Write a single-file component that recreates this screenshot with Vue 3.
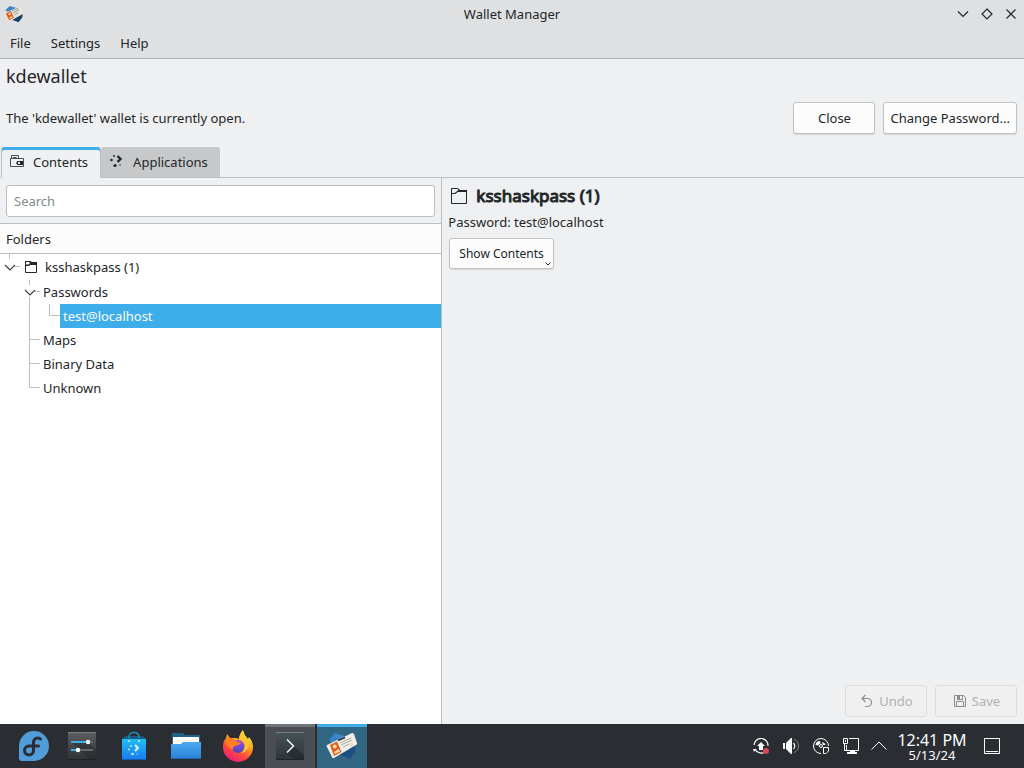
<script setup>
import { ref } from 'vue'
const search = ref('')
</script>

<template>
  <div class="desktop">
    <div class="window">
      <header class="top">
        <div class="titlebar">
          <svg class="app-icon" viewBox="0 0 32 32" aria-hidden="true">
            <path d="M2 10 L9 3 L19 6 L12 16 Z" fill="#3986cb" />
            <path d="M13 25 L30 16 L29 22 L23 29 Z" fill="#17406b" />
            <path d="M0 15 L26 3 L32 14 L7 29 Z" fill="#e9e5de" />
            <path d="M3 15 L11 11 L16 22 L8 26 Z" fill="#e25e14" />
            <circle cx="9" cy="16" r="2" fill="#f6d9c4" />
            <path d="M8 22 L13 19 L14 21 L9 24 Z" fill="#f6d9c4" />
            <path d="M13 11 L22 7 M15 14 L24 9 M17 17 L23 14" stroke="#77797b" stroke-width="1.2" />
          </svg>
          <h1 class="title">Wallet Manager</h1>
          <div class="winbtns">
            <button type="button" aria-label="Minimize">
              <svg viewBox="0 0 14 14"><path d="M2 4.5 L7 9.5 L12 4.5" /></svg>
            </button>
            <button type="button" aria-label="Maximize">
              <svg viewBox="0 0 14 14"><path d="M7 2 L12 7 L7 12 L2 7 Z" /></svg>
            </button>
            <button type="button" aria-label="Close window">
              <svg viewBox="0 0 14 14"><path d="M2.5 2.5 L11.5 11.5 M11.5 2.5 L2.5 11.5" /></svg>
            </button>
          </div>
        </div>
        <nav class="menubar">
          <button type="button">File</button>
          <button type="button">Settings</button>
          <button type="button">Help</button>
        </nav>
      </header>

      <h2 class="wallet-name">kdewallet</h2>
      <div class="status">
        <span class="status-text">The 'kdewallet' wallet is currently open.</span>
        <button type="button" class="btn close-btn">Close</button>
        <button type="button" class="btn">Change Password...</button>
      </div>

      <div class="tabs" role="tablist">
        <button type="button" role="tab" class="tab active" aria-selected="true">
          <svg viewBox="0 0 16 16" aria-hidden="true">
            <path d="M1.5 4.5 H14.5 V12.5 H1.5 Z M2.5 4.5 V1.5 H9.5 V4.5 M4.5 4.5 V3.5 H7.5" fill="none" stroke="#4b4e51" />
            <path d="M7 9 L8.500 7 H14 V11 H8.500 Z" fill="#232629" />
            <rect x="9" y="8" width="2" height="2" fill="#eff0f1" />
          </svg>
          Contents
        </button>
        <button type="button" role="tab" class="tab" aria-selected="false">
          <svg viewBox="0 0 16 16" aria-hidden="true">
            <path d="M8.500 2 L11.500 5 L8.500 8" fill="none" stroke="#232629" stroke-width="2.400" />
            <g fill="#232629">
              <circle cx="5" cy="2" r="1" /><circle cx="2.500" cy="6" r="1.300" />
              <circle cx="6" cy="11.500" r="1.600" /><circle cx="11" cy="11" r=".8" />
            </g>
          </svg>
          Applications
        </button>
      </div>

      <main class="panes">
        <section class="left">
          <div class="search">
            <input v-model="search" type="text" placeholder="Search" aria-label="Search" />
          </div>
          <div class="folders-head">Folders</div>
          <div class="tree" role="tree">
            <div class="row root" role="treeitem" aria-expanded="true">
              <svg class="branch" width="20" height="26" viewBox="0 0 20 26">
                <path class="line" d="M9.5 0 V5 M15 12.5 H20" />
                <path class="arrow" d="M5 11 L10 16 L15 11" />
              </svg>
              <svg class="folder" width="16" height="16" viewBox="0 0 16 16">
                <path d="M2.5 2.5 H7.5 L8.5 3.5 H13.5 V13.5 H2.5 Z" fill="none" stroke="#232629" />
                <path d="M2 2 H7 L9 3 H14 V6 H7 L6 7 H2 Z" fill="#232629" />
                <path d="M3 3 H6 L7 4 L5.500 5.500 H3 Z" fill="#fff" />
              </svg>
              <span>ksshaskpass (1)</span>
            </div>
            <div class="row" role="treeitem" aria-expanded="true">
              <svg class="branch" width="40" height="24" viewBox="0 0 40 24">
                <path class="line" d="M29.5 0 V5 M35 11.500 H40 M29.5 17 V24" />
                <path class="arrow" d="M25 10 L30 15 L35 10" />
              </svg>
              <span>Passwords</span>
            </div>
            <div class="row" role="treeitem" aria-selected="true">
              <svg class="branch" width="60" height="24" viewBox="0 0 60 24">
                <path class="line" d="M29.5 0 V24 M49.5 0 V11.5 H60" />
              </svg>
              <span class="selected">test@localhost</span>
            </div>
            <div class="row" role="treeitem">
              <svg class="branch" width="40" height="24" viewBox="0 0 40 24"><path class="line" d="M29.5 0 V24 M30 11.5 H40" /></svg>
              <span>Maps</span>
            </div>
            <div class="row" role="treeitem">
              <svg class="branch" width="40" height="24" viewBox="0 0 40 24"><path class="line" d="M29.5 0 V24 M30 11.5 H40" /></svg>
              <span>Binary Data</span>
            </div>
            <div class="row" role="treeitem">
              <svg class="branch" width="40" height="24" viewBox="0 0 40 24"><path class="line" d="M29.5 0 V11.5 H40" /></svg>
              <span>Unknown</span>
            </div>
          </div>
        </section>

        <section class="right">
          <div class="entry-head">
            <svg width="22" height="22" viewBox="0 0 22 22" aria-hidden="true">
              <path d="M3.5 3.5 H9.500 L11.500 5.500 H18.500 V18.500 H3.500 Z" fill="none" stroke="#232629" />
              <path d="M10 3 L12 5 H19 V7 H10 L7 9 H3 V8 H6.500 L10.500 5 Z" fill="#232629" />
            </svg>
            <h3>ksshaskpass (1)</h3>
          </div>
          <p class="entry-sub">Password: test@localhost</p>
          <button type="button" class="btn show-btn">
            Show Contents
            <svg viewBox="0 0 6 4" aria-hidden="true"><path d="M.5 .5 L3 3 L5.5 .5" fill="none" stroke="#232629" /></svg>
          </button>
          <div class="actions">
            <button type="button" class="btn" disabled>
              <svg viewBox="0 0 16 16" aria-hidden="true">
                <path d="M6.500 2 L3 5.500 L6.500 9 M3 5.500 H8.500 A4 4 0 0 1 8.500 13.500 H6" fill="none" stroke="#8b8d8f" stroke-width="1.2" />
              </svg>
              Undo
            </button>
            <button type="button" class="btn" disabled>
              <svg viewBox="0 0 16 16" aria-hidden="true">
                <path d="M2.500 2.500 H11.500 L13.500 4.500 V13.500 H2.500 Z M4.500 13.500 V8.500 H11.500 V13.500" fill="none" stroke="#8b8d8f" />
                <path d="M5 2 H11 V7 H5 Z M8 3 V6 H10 V3 Z" fill="#8b8d8f" fill-rule="evenodd" />
              </svg>
              Save
            </button>
          </div>
        </section>
      </main>
    </div>

    <footer class="panel">
      <button type="button" class="launcher start" aria-label="Application Launcher">
        <svg viewBox="0 0 32 32">
          <path d="M16 1 A15 15 0 1 1 16 31 H4 A3 3 0 0 1 1 28 V16 A15 15 0 0 1 16 1 Z" fill="#519dd9" />
          <path d="M22.500 9 C19 6.500 15.500 9 15.500 12.500 V20.500 A4.500 4.500 0 1 1 11 16 M11 16 H20.500" fill="none" stroke="#2a2e32" stroke-width="3" stroke-linecap="round" />
        </svg>
      </button>
      <button type="button" class="launcher settings" aria-label="System Settings">
        <svg viewBox="0 0 32 32">
          <defs>
            <linearGradient id="gs" x1="0" y1="0" x2="0" y2="1"><stop offset="0" stop-color="#5b5e61" /><stop offset="1" stop-color="#303336" /></linearGradient>
          </defs>
          <rect x="2" y="2" width="28" height="28" fill="url(#gs)" />
          <path d="M5 12 L24 30 H30 V20 L22 12 Z" fill="#252729" opacity=".5" />
          <path d="M2 2.500 H30" stroke="#797b7d" />
          <path d="M2 29.500 H30" stroke="#202325" />
          <path d="M5 12 H27 M5 20 H27" stroke="#66696b" stroke-width="2" />
          <path d="M5 12 H20 M5 20 H12" stroke="#3daee9" stroke-width="2" />
          <circle cx="22" cy="12" r="2.200" fill="#fff" /><circle cx="12" cy="20" r="2.200" fill="#fff" />
        </svg>
      </button>
      <button type="button" class="launcher" aria-label="Discover">
        <svg viewBox="0 0 32 32">
          <defs>
            <linearGradient id="gb" x1="0" y1="0" x2="0" y2="1"><stop offset="0" stop-color="#1fc0f5" /><stop offset="1" stop-color="#1b78ee" /></linearGradient>
          </defs>
          <path d="M4 9 L7 6 H25 L28 9 Z" fill="#19597e" />
          <rect x="4" y="9" width="24" height="21" fill="url(#gb)" />
          <path d="M4 29.500 H28" stroke="#145dac" />
          <path d="M11 11 V7 Q11 2.500 16 2.500 T21 7 V11" fill="none" stroke="#1c91bf" stroke-width="1.300" />
          <circle cx="11" cy="11" r="1" fill="#d9f3ff" /><circle cx="21" cy="11" r="1" fill="#d9f3ff" />
          <path d="M17 15 L20 18 L17 21" fill="none" stroke="#e8f7ff" stroke-width="2" />
          <g fill="#bfe6ff"><circle cx="13" cy="16" r="1" /><circle cx="11" cy="19.500" r="1" /><circle cx="14.500" cy="24" r="1.300" /><circle cx="19" cy="24" r="1" opacity=".4" /></g>
        </svg>
      </button>
      <button type="button" class="launcher" aria-label="Files">
        <svg viewBox="0 0 32 32">
          <defs>
            <linearGradient id="gf" x1="0" y1="0" x2="0" y2="1"><stop offset="0" stop-color="#4ba9f0" /><stop offset="1" stop-color="#2a80d8" /></linearGradient>
          </defs>
          <path d="M2 3 H13 L15 5 H30 V20 H2 Z" fill="#1e6387" />
          <path d="M3 7 H29 V20 H3 Z" fill="#fcfaf3" />
          <path d="M1 14 H11 L13 12 H31 V29 H1 Z" fill="url(#gf)" />
          <path d="M1 28.500 H31" stroke="#1e65b1" />
        </svg>
      </button>
      <button type="button" class="launcher" aria-label="Firefox">
        <svg viewBox="0 0 32 32">
          <defs>
            <linearGradient id="gx" x1=".8" y1="0" x2=".25" y2="1"><stop offset="0" stop-color="#fff14a" /><stop offset=".4" stop-color="#ffa01f" /><stop offset=".7" stop-color="#ff433f" /><stop offset="1" stop-color="#e91b87" /></linearGradient>
            <linearGradient id="gp" x1="0" y1="0" x2="0" y2="1"><stop offset="0" stop-color="#a24bf0" /><stop offset="1" stop-color="#4b45b5" /></linearGradient>
          </defs>
          <path d="M5 4 L8 8 L14 8 L17 9 Q17 4 21 0 Q22 5 26 9 L27 7 Q31 12 31 17 A15 15 0 0 1 1 17 Q1 11 4 8 Z" fill="url(#gx)" />
          <circle cx="16" cy="16.500" r="6.500" fill="url(#gp)" />
          <path d="M3 11 Q7 7 12 9 L15 12 L19 12.500 Q18 15 14 15.500 Q10 17 11 20 Q6 19 3 11 Z" fill="#ff7d24" />
          <path d="M17 9 Q22 10 23 15 Q23 20 19 23 Q28 21 27 12 Q23 9 21 3 Q18 5 17 9 Z" fill="#ffc62e" />
        </svg>
      </button>
      <button type="button" class="task" aria-label="Konsole">
        <svg viewBox="0 0 32 32">
          <defs>
            <linearGradient id="gt" x1="0" y1="0" x2="0" y2="1"><stop offset="0" stop-color="#475357" /><stop offset="1" stop-color="#2d3437" /></linearGradient>
          </defs>
          <rect x="2" y="2" width="28" height="28" fill="url(#gt)" />
          <path d="M13 23 L20 16 L30 26 V30 H20 Z" fill="#20282b" opacity=".6" />
          <path d="M2 2.500 H30" stroke="#718181" />
          <path d="M2 29.500 H30" stroke="#202628" />
          <path d="M13 9.500 L19.500 16 L13 22.500" fill="none" stroke="#f2f4f4" stroke-width="1.500" />
        </svg>
      </button>
      <button type="button" class="task current" aria-label="Wallet Manager">
        <svg viewBox="0 0 32 32">
          <path d="M3 10 L9 3 L18 6 L24 29 L17 24 Z" fill="#3986cb" />
          <path d="M13 24 L29 15 L29 22 L24 29 Z" fill="#1b4f83" />
          <path d="M1 15 L26 3 Q27 2.500 28 4 L31 13 Q31.500 14 30 15 L8 28 Q6.500 29 6 27 L.5 16 Z" fill="#f1eee7" />
          <path d="M4 15 L11 11.500 L15.500 22 L8 26 Z" fill="#e25e14" />
          <circle cx="8.800" cy="16.500" r="2" fill="#f7d9c0" />
          <path d="M8 22 L13 19 L14 21.500 L9 24 Z" fill="#f7d9c0" />
          <path d="M12 10.500 L19 7.500" stroke="#292b2d" stroke-width="1.500" />
          <path d="M14 13 L25 8 M15 15 L26 10 M17 17 L23 14" stroke="#9a9994" stroke-width=".8" />
          <circle cx="25.500" cy="15" r="2" fill="#dddcd7" />
        </svg>
      </button>

      <div class="tray">
        <button type="button" aria-label="Updates">
          <svg viewBox="0 0 16 16">
            <path d="M1 7 A7 7 0 0 1 15 8 M2 11 A7 7 0 0 0 11 14.500" fill="none" stroke="#fcfcfc" stroke-width="1.200" />
            <path d="M8 4 L12 8 H10 V12 H6 V8 H4 Z M0 11 H3.500 L1 14 Z" fill="#fcfcfc" />
            <circle cx="13" cy="13" r="3" fill="#da4453" />
          </svg>
        </button>
        <button type="button" aria-label="Volume">
          <svg viewBox="0 0 16 16">
            <path d="M0 5 H2 V11 H0 Z M3 5 L8 0 H9 V16 H8 L3 11 Z" fill="#fcfcfc" />
            <path d="M10.500 5 Q13 8 10.500 11" fill="none" stroke="#fcfcfc" stroke-width="1.200" />
            <path d="M11 1.500 Q15.500 3 15.500 8 T11 14.500" fill="none" stroke="#7f8285" />
          </svg>
        </button>
        <button type="button" aria-label="Disks">
          <svg viewBox="0 0 16 16">
            <path d="M8 15.500 A7.500 7.500 0 1 1 15.500 8" fill="none" stroke="#fcfcfc" />
            <path d="M2.500 7 Q3 3 7 3 L7.500 5.500 Q6 5.500 5.500 7.500 Z M9 4 L10 7 H12.500 Q12 4.500 9 4 Z" fill="#fcfcfc" />
            <circle cx="8" cy="8" r="1.500" fill="none" stroke="#fcfcfc" />
            <path d="M10.500 9.500 H15.500 V13 L13 15.500 H10.500 Z" fill="#2a2e32" stroke="#fcfcfc" />
          </svg>
        </button>
        <button type="button" aria-label="Network">
          <svg viewBox="0 0 16 16">
            <path d="M6 .5 H15.500 V12.500 H3.500 V7 M.5 .5 H4.500 V5.500 H.5 Z M1.500 6 V12.500 H4" fill="none" stroke="#fcfcfc" />
            <path d="M2 2 H3 V4 H2 Z M7 13 H12 V14 H14 V16 H4 V14 H7 Z" fill="#fcfcfc" />
          </svg>
        </button>
        <button type="button" aria-label="Show hidden icons">
          <svg viewBox="0 0 16 16"><path d="M.5 11.500 L8 4 L15.500 11.500" fill="none" stroke="#fcfcfc" /></svg>
        </button>
      </div>
      <div class="clock">
        <div class="time">12:41 PM</div>
        <div class="date">5/13/24</div>
      </div>
      <button type="button" class="peek" aria-label="Peek at Desktop">
        <svg viewBox="0 0 16 16"><path d="M.5 .5 H15.500 V15.500 H.5 Z M2 13.500 H14" fill="none" stroke="#fcfcfc" /></svg>
      </button>
    </footer>
  </div>
</template>

<style>
body {
  margin: 0;
}
</style>

<style scoped>
* {
  box-sizing: border-box;
}
.desktop {
  display: flex;
  flex-direction: column;
  min-height: 100vh;
  background: #eff0f1;
  color: #232629;
  font: 13px/20px "Noto Sans", sans-serif;
}
button {
  font: inherit;
  color: inherit;
  background: none;
  border: 0;
  padding: 0;
}
svg {
  display: block;
  flex: none;
}
.window {
  flex: 1;
  display: flex;
  flex-direction: column;
}
.top {
  background: #dee0e2;
  border-bottom: 1px solid #afb1b3;
}
.titlebar {
  display: grid;
  grid-template-columns: 1fr auto 1fr;
  align-items: center;
  height: 28px;
  padding: 0 4px;
}
.app-icon {
  width: 20px;
  height: 20px;
}
.title {
  margin: 0;
  font-size: 13px;
  font-weight: 400;
}
.winbtns {
  display: flex;
  justify-content: flex-end;
  gap: 10px;
  padding-right: 2px;
}
.winbtns svg {
  width: 14px;
  height: 14px;
  fill: none;
  stroke: #232629;
  stroke-width: 1.2;
}
.menubar {
  display: flex;
  height: 30px;
}
.menubar button {
  padding: 0 10px;
}
.wallet-name {
  margin: 0;
  padding: 4px 6px;
  font-size: 18px;
  line-height: 27px;
  font-weight: 400;
}
.status {
  display: flex;
  align-items: center;
  gap: 8px;
  padding: 8px 7px 13px 6px;
}
.status-text {
  flex: 1;
}
.btn {
  height: 32px;
  padding: 0 6px;
  background: #fcfcfc;
  border: 1px solid #c0c2c4;
  border-radius: 3px;
  box-shadow: 0 1px 1px #d3d5d6;
}
.close-btn {
  width: 82px;
}
.tabs {
  display: flex;
  padding-left: 1px;
  background: linear-gradient(#bcbebf, #bcbebf) left bottom / 100% 1px no-repeat;
}
.tab {
  display: flex;
  align-items: center;
  gap: 8px;
  height: 31px;
  padding: 0 12px 0 8px;
  background: #c6c8c9;
  border-bottom: 1px solid #bcbebf;
  border-radius: 3px 3px 0 0;
}
.tab.active {
  padding: 0 12px 0 7px;
  background: #eff0f1;
  border: 1px solid #bcbebf;
  border-top: 0;
  border-bottom-color: #eff0f1;
  box-shadow: inset 0 3px #3daee9;
}
.tab svg {
  width: 16px;
  height: 16px;
}
.panes {
  flex: 1;
  display: grid;
  grid-template-columns: 43.2% 1fr;
}
.left {
  display: flex;
  flex-direction: column;
  border-right: 1px solid #bcbebf;
}
.search {
  padding: 7px 6px 6px;
}
.search input {
  display: block;
  width: 100%;
  height: 32px;
  padding: 0 7px;
  font: inherit;
  color: #232629;
  background: #fff;
  border: 1px solid #bcbebf;
  border-radius: 3px;
}
.search input::placeholder {
  color: #7f8c8d;
  opacity: 1;
}
.folders-head {
  height: 31px;
  padding: 0 6px;
  line-height: 30px;
  background: #fcfcfc;
  border-top: 1px solid #bcbebf;
  border-bottom: 1px solid #bcbebf;
}
.tree {
  flex: 1;
  background: #fff;
}
.row {
  display: flex;
  align-items: center;
  height: 24px;
}
.row span {
  flex: 1;
  padding-left: 3px;
  line-height: 24px;
}
.root {
  height: 26px;
}
.root span {
  padding-left: 6px;
}
.folder {
  margin-left: 3px;
}
.row .selected {
  background: #3daee9;
  color: #fcfcfc;
}
.branch path {
  fill: none;
}
.branch .line {
  stroke: #bdbfc0;
}
.branch .arrow {
  stroke: #3e4144;
  stroke-width: 1.2;
}
.right {
  display: flex;
  flex-direction: column;
  align-items: flex-start;
  padding: 6px 7px 7px 6px;
}
.entry-head {
  display: flex;
  align-items: center;
  gap: 6px;
  height: 24px;
}
.entry-head h3 {
  margin: 0;
  font-size: 17px;
  line-height: 24px;
  font-weight: 400;
  -webkit-text-stroke: 1px #232629;
}
.entry-sub {
  margin: 4px 0 6px;
}
.show-btn {
  position: relative;
  height: 31px;
  margin-left: 1px;
  padding: 0 9px;
  font-size: 12px;
}
.show-btn svg {
  position: absolute;
  right: 2px;
  bottom: 2px;
  width: 6px;
  height: 4px;
}
.actions {
  display: flex;
  gap: 8px;
  margin-top: auto;
  margin-left: auto;
}
.actions .btn {
  display: flex;
  align-items: center;
  justify-content: center;
  gap: 4px;
  width: 82px;
  color: #b0b1b2;
  background: #f0f0f0;
  border-color: #dcddde;
  box-shadow: none;
}
.actions svg {
  width: 16px;
  height: 16px;
}
.panel {
  display: flex;
  align-items: center;
  height: 44px;
  background: #2a2e32;
  color: #fcfcfc;
}
.launcher {
  display: flex;
  justify-content: center;
  width: 52px;
}
.launcher.start {
  width: 48px;
  margin-left: 10px;
}
.launcher.settings {
  width: 48px;
  margin-right: 2px;
}
.panel .launcher svg,
.task svg {
  width: 32px;
  height: 32px;
}
.task {
  display: flex;
  align-items: center;
  justify-content: center;
  width: 50px;
  height: 44px;
  margin-left: 2px;
  background: #4a4d51;
  box-shadow: inset 0 3px #707376;
}
.launcher + .task {
  margin-left: 1px;
}
.task.current {
  background: #316683;
  box-shadow: inset 0 3px #3daee9;
}
.tray {
  display: flex;
  gap: 14px;
  margin-left: auto;
}
.tray button:last-child {
  margin-left: -2px;
}
.tray svg,
.peek svg {
  width: 16px;
  height: 16px;
}
.clock {
  width: 90px;
  text-align: center;
}
.time {
  font-size: 16px;
  line-height: 18px;
}
.date {
  font-size: 13px;
  line-height: 12px;
}
.peek {
  margin: 0 24px 0 7px;
}
</style>
